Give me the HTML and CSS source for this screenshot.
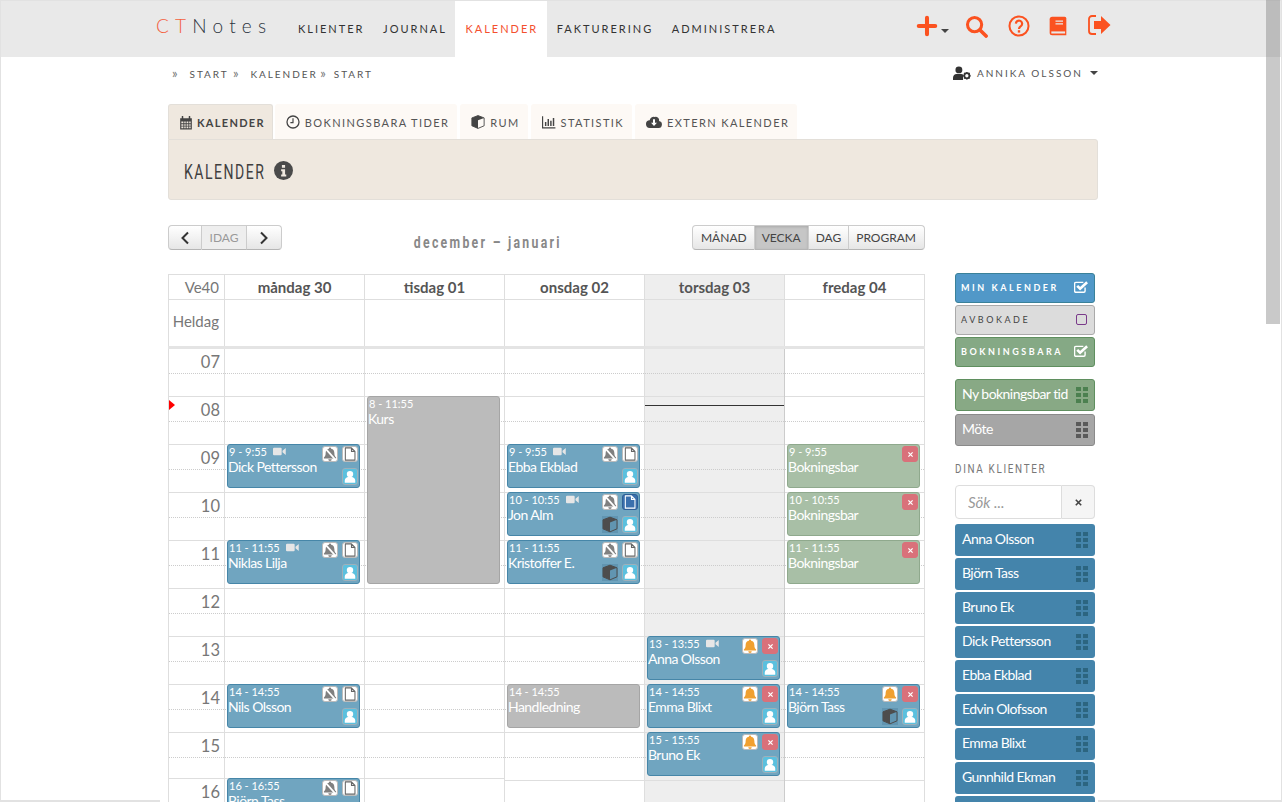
FILE: index.html
```html
<!DOCTYPE html>
<html lang="sv">
<head>
    <meta charset="UTF-8">
    <title>CTNotes - Kalender</title>
    <link rel="stylesheet" href="styles.css">
</head>
<body>
    <!-- icon sprite -->
    <svg class="sprite" xmlns="http://www.w3.org/2000/svg">
        <symbol id="i-plus" viewBox="0 0 24 24"><path d="M12 3v18M3 12h18" fill="none" stroke="currentColor" stroke-width="4.4" stroke-linecap="round"/></symbol>
        <symbol id="i-search" viewBox="0 0 24 24"><circle cx="10" cy="10" r="7.4" fill="none" stroke="currentColor" stroke-width="3.2"/><path d="M15.6 15.6l6.4 6.4" stroke="currentColor" stroke-width="3.8" stroke-linecap="round"/></symbol>
        <symbol id="i-help" viewBox="0 0 24 24"><circle cx="12" cy="12" r="10.4" fill="none" stroke="currentColor" stroke-width="2.2"/><path d="M8.6 9.4a3.4 3.4 0 1 1 5.4 2.8c-1.300.9-2 1.500-2 3" fill="none" stroke="currentColor" stroke-width="2.4"/><rect x="10.700" y="16.600" width="2.600" height="2.600"/></symbol>
        <symbol id="i-book" viewBox="0 0 24 24"><path d="M5 1h15a2 2 0 0 1 2 2v20H5a3 3 0 0 1-3-3V4a3 3 0 0 1 3-3z"/><path d="M9 6h9M9 9.500h9" stroke="#e9e9e9" stroke-width="1.500"/><path d="M4 18.500h16.500v2.500H4z" fill="#e9e9e9"/></symbol>
        <symbol id="i-out" viewBox="0 0 24 24"><path d="M9 3H5a3 3 0 0 0-3 3v12a3 3 0 0 0 3 3h4" fill="none" stroke="currentColor" stroke-width="1.800"/><path d="M7 8h7V3l9.500 9L14 21v-5H7z"/></symbol>
        <symbol id="i-usercog" viewBox="0 0 26 20"><circle cx="8.500" cy="5.500" r="5"/><path d="M0 20v-3c0-3.500 2.500-5.500 5-5.500h7c1 0 1.800.3 2.500.8V20z"/><circle cx="20" cy="14" r="3.700" fill="none" stroke="currentColor" stroke-width="2.600"/><path d="M20 8.500v2M20 17.500v2M14.500 14h2M23.500 14h2M16 10l1.500 1.500M22.500 16.500L24 18M16 18l1.500-1.500M22.500 11.500L24 10" stroke="currentColor" stroke-width="1.800"/></symbol>
        <symbol id="i-cal" viewBox="0 0 24 24"><path d="M2 4h20v19H2z M4 9.500v2.800h3.500V9.500z M9 9.500v2.800h2.500V9.500z M13 9.500v2.800h3V9.500z M17.500 9.500v2.800H20V9.500z M4 14v2.500h3.500V14z M9 14v2.500h2.500V14z M13 14v2.500h3V14z M17.500 14v2.500H20V14z M4 18v3h3.500v-3z M9 18v3h2.500v-3z M13 18v3h3v-3z M17.500 18v3H20v-3z" fill-rule="evenodd"/><path d="M6 1v5M18 1v5" stroke="currentColor" stroke-width="2.600" stroke-linecap="round"/></symbol>
        <symbol id="i-clock" viewBox="0 0 24 24"><circle cx="12" cy="12" r="10.300" fill="none" stroke="currentColor" stroke-width="2.200"/><path d="M12 5.500V13h-4.500" fill="none" stroke="currentColor" stroke-width="2"/></symbol>
        <symbol id="i-cube" viewBox="0 0 24 24"><path d="M12 1l10.500 4v13.500L12 23 1.500 18.500V5z" fill="none" stroke="currentColor" stroke-width="1.500" stroke-linejoin="round"/><path d="M12 1l10.500 4L12 9 1.500 5zM1.500 5L12 9v14L1.500 18.500z"/></symbol>
        <symbol id="i-chart" viewBox="0 0 24 24"><path d="M1 2v20h22" fill="none" stroke="currentColor" stroke-width="2"/><path d="M5 12h2.500v7H5zM9.500 7H12v12H9.500zM14 10h2.500v9H14zM18.500 5H21v14h-2.500z"/></symbol>
        <symbol id="i-cloud" viewBox="0 0 24 20"><path d="M19.500 8.500A5 5 0 0 0 13 2.500 6 6 0 0 0 5.500 7.500 5.500 5.500 0 0 0 6 19h13a5.300 5.300 0 0 0 .5-10.500z"/><path d="M10.500 6h3v5h3L12 16l-4.500-5h3z" fill="#fff"/></symbol>
        <symbol id="i-info" viewBox="0 0 24 24"><circle cx="12" cy="12" r="12"/><path d="M10 5h4v3.500h-4zM9 10.500h5V17h1.500v2.500h-6.500V17h1.500v-4H9z" fill="#efe8df"/></symbol>
        <symbol id="i-video" viewBox="0 0 24 16"><rect x="0" y="1" width="16" height="14" rx="2"/><path d="M17.500 6.500L23.500 1.500v13l-6-5z"/></symbol>
        <symbol id="i-bell" viewBox="0 0 24 24"><path d="M12 1a2 2 0 0 1 2 2c4 .8 5.500 4 5.500 7.500 0 4 1 5.500 3 7.500v1.500h-21V18c2-2 3-3.500 3-7.500C4.500 7 6 3.800 10 3a2 2 0 0 1 2-2z"/><path d="M9 21h6a3 3 0 0 1-6 0z"/></symbol>
        <symbol id="i-bellx" viewBox="0 0 24 24"><path d="M12 1a2 2 0 0 1 2 2c4 .8 5.500 4 5.500 7.500 0 4 1 5.500 3 7.500v1.500h-21V18c2-2 3-3.500 3-7.500C4.500 7 6 3.800 10 3a2 2 0 0 1 2-2z"/><path d="M9 21h6a3 3 0 0 1-6 0z"/><path d="M3 1.500l19 21" stroke="#fff" stroke-width="3"/></symbol>
        <symbol id="i-file" viewBox="0 0 24 24"><path d="M4 1.500h10.500l6 6v15H4zM14.500 1.500v6h6" fill="none" stroke="currentColor" stroke-width="1.800" stroke-linejoin="round"/></symbol>
        <symbol id="i-user" viewBox="0 0 24 24"><circle cx="12" cy="7" r="5.500"/><path d="M3 22v-3.500c0-4 2.500-6 5.500-6.500h7c3 .5 5.500 2.500 5.500 6.500V22z"/></symbol>
        <symbol id="i-x" viewBox="0 0 10 10"><path d="M2 2l6 6M8 2l-6 6" fill="none" stroke="currentColor" stroke-width="1.800"/></symbol>
        <symbol id="i-check" viewBox="0 0 24 20"><path d="M19 11v6a2 2 0 0 1-2 2H3a2 2 0 0 1-2-2V4a2 2 0 0 1 2-2h13" fill="none" stroke="currentColor" stroke-width="2.400"/><path d="M5.500 8l5 5L22.500 2" fill="none" stroke="currentColor" stroke-width="4.600"/></symbol>
        <symbol id="i-grip" viewBox="0 0 12 16"><path d="M0 0h5v4H0zM7 0h5v4H7zM0 6h5v4H0zM7 6h5v4H7zM0 12h5v4H0zM7 12h5v4H7z"/></symbol>
        <symbol id="i-prev" viewBox="0 0 10 14"><path d="M8 1.500L2.500 7 8 12.500" fill="none" stroke="currentColor" stroke-width="2"/></symbol>
        <symbol id="i-next" viewBox="0 0 10 14"><path d="M2 1.500L7.500 7 2 12.500" fill="none" stroke="currentColor" stroke-width="2"/></symbol>
    </svg>

    <div class="app">
        <header class="topbar">
            <a class="logo"><span class="logo-ct">CT</span>Notes</a>
            <nav class="mainnav">
                <a>KLIENTER</a>
                <a>JOURNAL</a>
                <a class="active">KALENDER</a>
                <a>FAKTURERING</a>
                <a>ADMINISTRERA</a>
            </nav>
            <div class="topicons">
                <span class="plus-wrap"><svg class="ic-plus"><use href="#i-plus"/></svg><span class="caret"></span></span>
                <svg class="ic-search"><use href="#i-search"/></svg>
                <svg class="ic-help"><use href="#i-help"/></svg>
                <svg class="ic-book"><use href="#i-book"/></svg>
                <svg class="ic-out"><use href="#i-out"/></svg>
            </div>
        </header>

        <div class="page">
            <div class="crumbs">
                <div class="crumb-path"><span class="sep">»</span>START <span class="sep">»</span>KALENDER <span class="sep sep-tight">»</span>START</div>
                <div class="crumb-user"><svg class="ic-usercog"><use href="#i-usercog"/></svg>ANNIKA OLSSON<span class="caret"></span></div>
            </div>

            <ul class="tabs">
                <li class="tab active"><svg><use href="#i-cal"/></svg>KALENDER</li>
                <li class="tab"><svg><use href="#i-clock"/></svg>BOKNINGSBARA TIDER</li>
                <li class="tab"><svg><use href="#i-cube"/></svg>RUM</li>
                <li class="tab"><svg><use href="#i-chart"/></svg>STATISTIK</li>
                <li class="tab"><svg class="ic-cloud"><use href="#i-cloud"/></svg>EXTERN KALENDER</li>
            </ul>
            <div class="panel">
                <h1>KALENDER</h1>
                <svg class="ic-info"><use href="#i-info"/></svg>
            </div>

            <div class="columns">
                <main class="calendar">
                    <div class="toolbar">
                        <div class="btn-group">
                            <button class="btn btn-nav"><svg><use href="#i-prev"/></svg></button>
                            <button class="btn btn-today">IDAG</button>
                            <button class="btn btn-nav"><svg><use href="#i-next"/></svg></button>
                        </div>
                        <h2 class="range">december – januari</h2>
                        <div class="btn-group">
                            <button class="btn btn-view">MÅNAD</button>
                            <button class="btn btn-view on">VECKA</button>
                            <button class="btn btn-view">DAG</button>
                            <button class="btn btn-view">PROGRAM</button>
                        </div>
                    </div>

                    <div class="cal-grid cal-head">
                        <div class="cell week">Ve40</div>
                        <div class="cell">måndag 30</div>
                        <div class="cell">tisdag 01</div>
                        <div class="cell">onsdag 02</div>
                        <div class="cell today">torsdag 03</div>
                        <div class="cell">fredag 04</div>
                    </div>
                    <div class="cal-grid cal-allday">
                        <div class="cell week">Heldag</div>
                        <div class="cell"></div>
                        <div class="cell"></div>
                        <div class="cell"></div>
                        <div class="cell today"></div>
                        <div class="cell"></div>
                    </div>

                    <div class="cal-grid cal-body">
                        <div class="hours">
                            <span class="marker"></span>
                            <div class="slot">07</div><div class="slot">08</div><div class="slot">09</div><div class="slot">10</div><div class="slot">11</div><div class="slot">12</div><div class="slot">13</div><div class="slot">14</div><div class="slot short">15</div><div class="slot">16</div>
                        </div>

                        <div class="day">
                            <div class="slot"></div><div class="slot"></div><div class="slot"></div><div class="slot"></div><div class="slot"></div><div class="slot"></div><div class="slot"></div><div class="slot"></div><div class="slot short"></div><div class="slot"></div>
                            <div class="event" style="top:95px">
                                <div class="ev-text"><div class="ev-time">9 - 9:55 <svg class="ic-video"><use href="#i-video"/></svg></div><div class="ev-name">Dick Pettersson</div></div>
                                <div class="ev-tools"><span class="tool t-mute"><svg><use href="#i-bellx"/></svg></span><span class="tool t-file"><svg><use href="#i-file"/></svg></span><span class="tool t-user"><svg><use href="#i-user"/></svg></span></div>
                            </div>
                            <div class="event" style="top:191px">
                                <div class="ev-text"><div class="ev-time">11 - 11:55 <svg class="ic-video"><use href="#i-video"/></svg></div><div class="ev-name">Niklas Lilja</div></div>
                                <div class="ev-tools"><span class="tool t-mute"><svg><use href="#i-bellx"/></svg></span><span class="tool t-file"><svg><use href="#i-file"/></svg></span><span class="tool t-user"><svg><use href="#i-user"/></svg></span></div>
                            </div>
                            <div class="event" style="top:335px">
                                <div class="ev-text"><div class="ev-time">14 - 14:55</div><div class="ev-name">Nils Olsson</div></div>
                                <div class="ev-tools"><span class="tool t-mute"><svg><use href="#i-bellx"/></svg></span><span class="tool t-file"><svg><use href="#i-file"/></svg></span><span class="tool t-user"><svg><use href="#i-user"/></svg></span></div>
                            </div>
                            <div class="event" style="top:429px">
                                <div class="ev-text"><div class="ev-time">16 - 16:55</div><div class="ev-name">Björn Tass</div></div>
                                <div class="ev-tools"><span class="tool t-mute"><svg><use href="#i-bellx"/></svg></span><span class="tool t-file"><svg><use href="#i-file"/></svg></span><span class="tool t-user"><svg><use href="#i-user"/></svg></span></div>
                            </div>
                        </div>

                        <div class="day">
                            <div class="slot"></div><div class="slot"></div><div class="slot"></div><div class="slot"></div><div class="slot"></div><div class="slot"></div><div class="slot"></div><div class="slot"></div><div class="slot short"></div><div class="slot"></div>
                            <div class="event grey" style="top:47px;height:188px">
                                <div class="ev-text"><div class="ev-time">8 - 11:55</div><div class="ev-name">Kurs</div></div>
                            </div>
                        </div>

                        <div class="day">
                            <div class="slot"></div><div class="slot"></div><div class="slot"></div><div class="slot"></div><div class="slot"></div><div class="slot"></div><div class="slot"></div><div class="slot"></div><div class="slot"></div><div class="slot"></div>
                            <div class="event" style="top:95px">
                                <div class="ev-text"><div class="ev-time">9 - 9:55 <svg class="ic-video"><use href="#i-video"/></svg></div><div class="ev-name">Ebba Ekblad</div></div>
                                <div class="ev-tools"><span class="tool t-mute"><svg><use href="#i-bellx"/></svg></span><span class="tool t-file"><svg><use href="#i-file"/></svg></span><span class="tool t-user"><svg><use href="#i-user"/></svg></span></div>
                            </div>
                            <div class="event" style="top:143px">
                                <div class="ev-text"><div class="ev-time">10 - 10:55 <svg class="ic-video"><use href="#i-video"/></svg></div><div class="ev-name">Jon Alm</div></div>
                                <div class="ev-tools"><span class="tool t-mute"><svg><use href="#i-bellx"/></svg></span><span class="tool t-file filled"><svg><use href="#i-file"/></svg></span><span class="t-cube"><svg><use href="#i-cube"/></svg></span><span class="tool t-user"><svg><use href="#i-user"/></svg></span></div>
                            </div>
                            <div class="event" style="top:191px">
                                <div class="ev-text"><div class="ev-time">11 - 11:55</div><div class="ev-name">Kristoffer E.</div></div>
                                <div class="ev-tools"><span class="tool t-mute"><svg><use href="#i-bellx"/></svg></span><span class="tool t-file"><svg><use href="#i-file"/></svg></span><span class="t-cube"><svg><use href="#i-cube"/></svg></span><span class="tool t-user"><svg><use href="#i-user"/></svg></span></div>
                            </div>
                            <div class="event grey" style="top:335px">
                                <div class="ev-text"><div class="ev-time">14 - 14:55</div><div class="ev-name">Handledning</div></div>
                            </div>
                        </div>

                        <div class="day today">
                            <div class="slot"></div><div class="slot"></div><div class="slot"></div><div class="slot"></div><div class="slot"></div><div class="slot"></div><div class="slot"></div><div class="slot"></div><div class="slot"></div><div class="slot"></div>
                            <div class="now-line"></div>
                            <div class="event" style="top:287px">
                                <div class="ev-text"><div class="ev-time">13 - 13:55 <svg class="ic-video"><use href="#i-video"/></svg></div><div class="ev-name">Anna Olsson</div></div>
                                <div class="ev-tools"><span class="tool t-bell"><svg><use href="#i-bell"/></svg></span><span class="tool t-del"><svg><use href="#i-x"/></svg></span><span class="tool t-user"><svg><use href="#i-user"/></svg></span></div>
                            </div>
                            <div class="event" style="top:335px">
                                <div class="ev-text"><div class="ev-time">14 - 14:55</div><div class="ev-name">Emma Blixt</div></div>
                                <div class="ev-tools"><span class="tool t-bell"><svg><use href="#i-bell"/></svg></span><span class="tool t-del"><svg><use href="#i-x"/></svg></span><span class="tool t-user"><svg><use href="#i-user"/></svg></span></div>
                            </div>
                            <div class="event" style="top:383px">
                                <div class="ev-text"><div class="ev-time">15 - 15:55</div><div class="ev-name">Bruno Ek</div></div>
                                <div class="ev-tools"><span class="tool t-bell"><svg><use href="#i-bell"/></svg></span><span class="tool t-del"><svg><use href="#i-x"/></svg></span><span class="tool t-user"><svg><use href="#i-user"/></svg></span></div>
                            </div>
                        </div>

                        <div class="day">
                            <div class="slot"></div><div class="slot"></div><div class="slot"></div><div class="slot"></div><div class="slot"></div><div class="slot"></div><div class="slot"></div><div class="slot"></div><div class="slot"></div><div class="slot"></div>
                            <div class="event green" style="top:95px">
                                <div class="ev-text"><div class="ev-time">9 - 9:55</div><div class="ev-name">Bokningsbar</div></div>
                                <div class="ev-tools"><span class="tool t-del"><svg><use href="#i-x"/></svg></span></div>
                            </div>
                            <div class="event green" style="top:143px">
                                <div class="ev-text"><div class="ev-time">10 - 10:55</div><div class="ev-name">Bokningsbar</div></div>
                                <div class="ev-tools"><span class="tool t-del"><svg><use href="#i-x"/></svg></span></div>
                            </div>
                            <div class="event green" style="top:191px">
                                <div class="ev-text"><div class="ev-time">11 - 11:55</div><div class="ev-name">Bokningsbar</div></div>
                                <div class="ev-tools"><span class="tool t-del"><svg><use href="#i-x"/></svg></span></div>
                            </div>
                            <div class="event" style="top:335px">
                                <div class="ev-text"><div class="ev-time">14 - 14:55</div><div class="ev-name">Björn Tass</div></div>
                                <div class="ev-tools"><span class="tool t-bell"><svg><use href="#i-bell"/></svg></span><span class="tool t-del"><svg><use href="#i-x"/></svg></span><span class="t-cube"><svg><use href="#i-cube"/></svg></span><span class="tool t-user"><svg><use href="#i-user"/></svg></span></div>
                            </div>
                        </div>
                    </div>
                </main>

                <aside class="sidebar">
                    <div class="toggles">
                        <div class="toggle t-blue">MIN KALENDER<svg><use href="#i-check"/></svg></div>
                        <div class="toggle t-plain">AVBOKADE<span class="box"></span></div>
                        <div class="toggle t-green">BOKNINGSBARA<svg><use href="#i-check"/></svg></div>
                    </div>
                    <div class="drags">
                        <div class="drag d-green">Ny bokningsbar tid<svg><use href="#i-grip"/></svg></div>
                        <div class="drag d-grey">Möte<svg><use href="#i-grip"/></svg></div>
                    </div>
                    <h3 class="side-title">DINA KLIENTER</h3>
                    <div class="search">
                        <input type="text" placeholder="Sök ...">
                        <button><svg><use href="#i-x"/></svg></button>
                    </div>
                    <div class="clients">
                        <div class="drag">Anna Olsson<svg><use href="#i-grip"/></svg></div>
                        <div class="drag">Björn Tass<svg><use href="#i-grip"/></svg></div>
                        <div class="drag">Bruno Ek<svg><use href="#i-grip"/></svg></div>
                        <div class="drag">Dick Pettersson<svg><use href="#i-grip"/></svg></div>
                        <div class="drag">Ebba Ekblad<svg><use href="#i-grip"/></svg></div>
                        <div class="drag">Edvin Olofsson<svg><use href="#i-grip"/></svg></div>
                        <div class="drag">Emma Blixt<svg><use href="#i-grip"/></svg></div>
                        <div class="drag">Gunnhild Ekman<svg><use href="#i-grip"/></svg></div>
                        <div class="drag drag-cut"><svg><use href="#i-grip"/></svg></div>
                    </div>
                </aside>
            </div>
        </div>
        <div class="scroll-thumb"></div>
    </div>
</body>
</html>
```

FILE: styles.css
```css
* {
    box-sizing: border-box;
}

html, body {
    margin: 0;
    padding: 0;
    height: 802px;
    overflow: hidden;
}

body {
    font-family: Lato, "Open Sans", sans-serif;
    color: #444;
    background: #fff;
}

.sprite {
    display: none;
}

.app {
    position: relative;
    height: 802px;
    border: 1px solid #e2e2e2;
    border-bottom-width: 2px;
}

.scroll-thumb {
    position: absolute;
    top: -1px;
    right: 1px;
    width: 14px;
    height: 324px;
    background: rgba(120, 120, 120, 0.4);
}

.caret {
    display: inline-block;
    width: 0;
    height: 0;
    border-left: 4px solid transparent;
    border-right: 4px solid transparent;
    border-top: 4px solid #444;
}

/* top bar */
.topbar {
    display: flex;
    height: 56px;
    background: #e9e9e9;
    padding-left: 155px;
}

.logo {
    font-size: 19px;
    letter-spacing: 6.2px;
    font-weight: 300;
    color: #2c3440;
    padding-top: 13px;
    width: 132px;
}

.logo-ct {
    color: #f4603e;
}

.mainnav {
    display: flex;
}

.mainnav a {
    display: block;
    font-size: 11px;
    letter-spacing: 2px;
    color: #333;
    padding: 21px 8.5px 0 10px;
}

.mainnav a.active {
    background: #fff;
    color: #f4502e;
}

.topicons {
    display: flex;
    align-items: flex-start;
    margin-left: auto;
    margin-right: 170px;
    color: #fb5220;
    fill: #fb5220;
    padding-top: 14px;
}

.topicons svg {
    display: block;
    fill: currentColor;
}

.plus-wrap {
    display: flex;
    align-items: flex-end;
    height: 22px;
}

.plus-wrap .caret {
    margin: 0 0 4px 3px;
}

.ic-plus {
    width: 22px;
    height: 22px;
}

.ic-search {
    width: 23px;
    height: 23px;
    margin-left: 16px;
}

.ic-help {
    width: 22px;
    height: 22px;
    margin-left: 20px;
}

.ic-book {
    width: 20px;
    height: 22px;
    margin-left: 18px;
}

.ic-out {
    width: 24px;
    height: 24px;
    margin-left: 19px;
    margin-top: -2px;
}

/* page */
.page {
    position: relative;
    width: 938px;
    margin-left: 159px;
    padding-left: 8px;
    background: #fff;
}

.crumbs {
    display: flex;
    justify-content: space-between;
    align-items: center;
    height: 31px;
    font-size: 10px;
    letter-spacing: 1.95px;
    color: #555;
}

.crumb-path {
    padding-left: 4px;
}

.sep {
    color: #777;
    font-size: 13px;
    letter-spacing: 1px;
    margin-right: 11px;
}

.sep-tight {
    margin-left: -2px;
    margin-right: 7px;
}

.crumb-user {
    display: flex;
    align-items: center;
    letter-spacing: 2px;
    color: #555;
}

.ic-usercog {
    width: 18px;
    height: 14px;
    fill: #333;
    color: #333;
    margin-right: 6px;
}

.crumb-user .caret {
    margin-left: 7px;
}

.tabs {
    display: flex;
    list-style: none;
    margin: 16px 0 0;
    padding: 0;
    height: 35px;
}

.tab {
    display: flex;
    align-items: center;
    height: 35px;
    padding: 1px 8px 0 11px;
    margin-right: 3px;
    font-size: 11px;
    letter-spacing: 1.4px;
    color: #555;
    background: #fdf9f5;
    border-radius: 3px 3px 0 0;
}

.tab svg {
    width: 14px;
    height: 14px;
    margin-right: 5px;
    fill: #444;
    color: #444;
}

.tab .ic-cloud {
    width: 16px;
}

.tab.active {
    font-weight: 700;
    letter-spacing: 1.3px;
    color: #444;
    background: #efe8df;
    border: 1px solid #e3dfd9;
    border-bottom: 0;
    margin-right: 2px;
    padding: 1px 7px 0 10px;
}

.tab.active svg {
    margin-right: 4px;
}

.panel {
    display: flex;
    align-items: center;
    height: 61px;
    padding: 5px 15px 0;
    background: #efe8df;
    border: 1px solid #e3dfd9;
    border-radius: 0 3px 3px 3px;
}

/* no condensed font installed, so the headings get squeezed */
.panel h1 {
    width: 83px;
    margin: 0;
    font-family: Roboto, sans-serif;
    font-size: 20px;
    font-weight: 400;
    letter-spacing: 2.2px;
    white-space: nowrap;
    color: #3f3f3f;
    transform: scaleX(0.7);
    transform-origin: left center;
}

.ic-info {
    width: 19px;
    height: 19px;
    margin-left: 7px;
    margin-top: -3px;
    fill: #4a4a4a;
}

.columns {
    display: flex;
    margin-top: 25px;
    align-items: flex-start;
}

/* calendar */
.calendar {
    width: 757px;
}

.toolbar {
    display: flex;
    justify-content: space-between;
    align-items: flex-start;
    height: 49px;
}

.btn-group {
    display: flex;
}

.btn {
    height: 25px;
    padding: 0;
    font-family: Lato, sans-serif;
    font-size: 12px;
    color: #444;
    background: linear-gradient(#fff, #e6e6e6);
    border: 1px solid #ccc;
    border-left-width: 0;
    border-bottom-color: #b5b5b5;
}

.btn:first-child {
    border-left-width: 1px;
    border-radius: 4px 0 0 4px;
}

.btn:last-child {
    border-radius: 0 4px 4px 0;
}

.btn-nav {
    width: 34px;
    color: #333;
}

.btn-nav:last-child {
    width: 35px;
}

.btn-nav svg {
    width: 10px;
    height: 14px;
    display: block;
    margin: 1px auto 0;
}

.btn-today {
    width: 45px;
    color: #999;
    background: #eee;
}

.btn-view {
    padding: 0 7px;
}

.btn-view:first-child {
    padding-left: 8px;
}

.btn-view:last-child {
    padding-right: 8px;
}

.btn-view.on {
    background: #c6c6c6;
    box-shadow: inset 0 1px 3px rgba(0, 0, 0, 0.15);
}

.range {
    margin: 7px 0 0 1px;
    font-family: Roboto, sans-serif;
    font-size: 17px;
    font-weight: 700;
    letter-spacing: 3.2px;
    white-space: nowrap;
    color: #888;
    transform: scaleX(0.72);
}

.cal-grid {
    display: grid;
    grid-template-columns: 57px repeat(5, 140px);
}

.cell {
    border-right: 1px solid #dedede;
    border-bottom: 1px solid #dedede;
    text-align: center;
}

.cell.week {
    border-left: 1px solid #dedede;
    text-align: right;
    padding-right: 5px;
    color: #777;
}

.cal-head {
    border-top: 1px solid #dedede;
}

.cal-head .cell {
    height: 25px;
    font-size: 15px;
    line-height: 24px;
    font-weight: 700;
    color: #555;
}

.cal-head .cell.week {
    font-weight: 400;
    color: #777;
}

.cal-allday .cell {
    height: 46px;
    font-size: 15px;
    line-height: 42px;
    border-bottom: 0;
}

.cell.today {
    background: #eee;
}

.cal-body {
    border-top: 3px solid #e4e4e4;
}

.hours {
    position: relative;
    border-left: 1px solid #dedede;
    border-right: 1px solid #dedede;
}

.slot {
    position: relative;
    height: 48px;
    border-bottom: 1px solid #dedede;
}

.slot.short {
    height: 46px;
}

.slot::after {
    content: "";
    position: absolute;
    left: 0;
    right: 0;
    top: 24px;
    border-top: 1px dotted #ccc;
}

.hours .slot {
    font-size: 16.5px;
    line-height: 26px;
    text-align: right;
    padding-right: 4px;
    color: #777;
}

.marker {
    position: absolute;
    left: 0;
    top: 51px;
    width: 0;
    height: 0;
    border-top: 5px solid transparent;
    border-bottom: 5px solid transparent;
    border-left: 6px solid #f00;
}

.day {
    position: relative;
    border-right: 1px solid #dedede;
}

.day.today {
    background: #eee;
    border-right-color: #ccc;
}

.now-line {
    position: absolute;
    left: 0;
    right: 0;
    top: 56px;
    border-top: 1px solid #333;
}

/* calendar events */
.event {
    position: absolute;
    left: 2px;
    width: 133px;
    height: 44px;
    display: flex;
    justify-content: space-between;
    padding: 1px 1px 0;
    color: #fff;
    background: #70a5c0;
    border: 1px solid #4686a8;
    border-radius: 3px;
}

.event.green {
    background: #a8bfa6;
    border-color: #8fa98d;
}

.event.grey {
    background: #bbb;
    border-color: #a5a5a5;
}

.ev-text {
    margin-top: -1px;
}

.ev-time {
    font-size: 11px;
    line-height: 13px;
    white-space: nowrap;
}

.ic-video {
    width: 13px;
    height: 9px;
    margin-left: 3px;
    fill: #e6e6e6;
}

.ev-name {
    margin-left: -1px;
    font-size: 14px;
    line-height: 17px;
    letter-spacing: -0.55px;
    white-space: nowrap;
}

.ev-tools {
    display: grid;
    grid-template-columns: 16px 16px;
    grid-template-rows: 16px 17px;
    column-gap: 4px;
    row-gap: 6px;
}

.tool {
    display: flex;
    align-items: center;
    justify-content: center;
    width: 16px;
    height: 16px;
    background: #fff;
    border: 1px solid #bbb;
    border-radius: 3px;
}

.tool svg {
    width: 14px;
    height: 14px;
}

.t-mute {
    grid-column: 1;
    grid-row: 1;
    fill: #808080;
}

.t-bell {
    grid-column: 1;
    grid-row: 1;
    fill: #f0a030;
}

.t-file {
    grid-column: 2;
    grid-row: 1;
    color: #666;
}

.t-file.filled {
    background: #3a70ad;
    border-color: #2f5f96;
    color: #fff;
}

.t-del {
    grid-column: 2;
    grid-row: 1;
    background: #d9717a;
    border-color: #d9717a;
    color: #fff;
}

.t-del svg {
    width: 7px;
    height: 7px;
}

.t-user {
    grid-column: 2;
    grid-row: 2;
    height: 17px;
    background: #5bc0de;
    border-color: #9fb0ba;
    fill: #fff;
}

.t-cube {
    grid-column: 1;
    grid-row: 2;
    width: 16px;
    height: 17px;
    color: #4d4d4d;
    fill: #4d4d4d;
    background: rgba(70, 120, 150, 0.35);
}

.t-cube svg {
    display: block;
    width: 16px;
    height: 17px;
}

/* sidebar */
.sidebar {
    width: 140px;
    margin-left: 30px;
    margin-top: 48px;
}

.toggles {
    display: flex;
    flex-direction: column;
    gap: 2px;
}

.toggle {
    display: flex;
    align-items: center;
    justify-content: space-between;
    height: 30px;
    padding: 0 6px 2px 5px;
    font-size: 9px;
    font-weight: 700;
    letter-spacing: 2.55px;
    border: 1px solid;
    border-radius: 3px;
}

.toggle svg {
    width: 14px;
    height: 12px;
    color: #fff;
}

.t-blue {
    color: #fff;
    background: #5198c8;
    border-color: #3a8199;
}

.t-plain {
    color: #444;
    font-weight: 400;
    background: #dcdcdc;
    border-color: #aaa;
}

.t-green {
    color: #fff;
    background: #85a985;
    border-color: #5f8f5f;
}

.box {
    width: 11px;
    height: 11px;
    border: 1px solid #7a3a8a;
    border-radius: 2px;
    margin-right: 1px;
}

.drags {
    display: flex;
    flex-direction: column;
    gap: 3px;
    margin-top: 12px;
}

.drag {
    display: flex;
    align-items: center;
    justify-content: space-between;
    height: 32px;
    padding: 0 7px 4px;
    font-size: 14px;
    letter-spacing: -0.55px;
    white-space: nowrap;
    color: #fff;
    background: #4484ab;
    border-radius: 3px;
}

.drag svg {
    width: 12px;
    height: 16px;
    flex: none;
    margin-top: 4px;
    fill: #2c6580;
}

.drag-cut {
    justify-content: flex-end;
}

.d-green {
    background: #88a985;
    border: 1px solid #5f8f5f;
    padding: 0 6px 4px;
}

.d-green svg {
    fill: #4c8050;
}

.d-grey {
    background: #a6a6a6;
    border: 1px solid #8a8a8a;
    padding: 0 6px 4px;
}

.d-grey svg {
    fill: #5a5a5a;
}

.side-title {
    margin: 15px 0 0;
    font-family: Roboto, sans-serif;
    font-size: 13px;
    font-weight: 400;
    line-height: 15px;
    letter-spacing: 2.2px;
    white-space: nowrap;
    color: #777;
    transform: scaleX(0.76);
    transform-origin: left center;
}

.search {
    display: flex;
    height: 34px;
    margin-top: 9px;
}

.search input {
    width: 107px;
    padding: 0 12px;
    font-family: Lato, sans-serif;
    font-size: 15px;
    font-style: italic;
    border: 1px solid #ddd;
    border-radius: 4px 0 0 4px;
}

.search input::placeholder {
    color: #999;
}

.search button {
    width: 33px;
    padding: 0;
    background: #f5f5f5;
    border: 1px solid #ddd;
    border-left: 0;
    border-radius: 0 4px 4px 0;
    color: #444;
}

.search button svg {
    display: block;
    width: 9px;
    height: 9px;
    margin: 0 auto;
}

.clients {
    display: flex;
    flex-direction: column;
    gap: 2px;
    margin-top: 5px;
}
```
